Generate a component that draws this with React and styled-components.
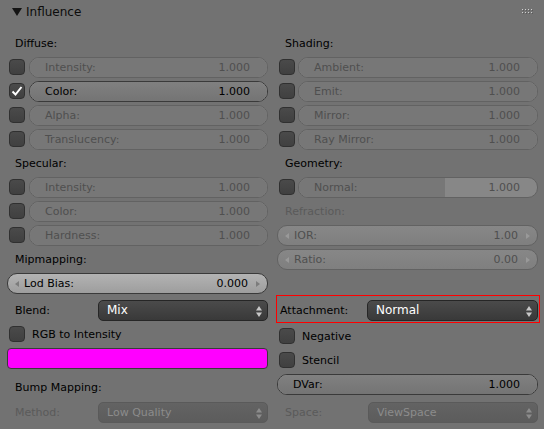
import React from 'react';
import styled, { createGlobalStyle, css } from 'styled-components';

const GlobalStyle = createGlobalStyle`
  html, body {
    margin: 0;
    padding: 0;
    background: #727272;
  }
  body {
    font-family: "DejaVu Sans", "Liberation Sans", sans-serif;
    font-size: 11px;
    color: #000;
  }
`;

const Panel = styled.div`
  width: 544px;
  height: 429px;
  overflow: hidden;
  background: #727272;
`;

const Header = styled.div`
  display: flex;
  align-items: center;
  height: 23px;
  padding: 0 11px 0 12px;
  font-size: 12px;
  color: #0c0c0c;
`;

const HeaderTitle = styled.span`
  margin-left: 4px;
  flex: 1;
`;

const Columns = styled.div`
  display: grid;
  grid-template-columns: 261px 261px;
  column-gap: 9px;
  padding: 0 7px;
  margin-top: ${p => p.$top || 0}px;
`;

const Column = styled.div`
  display: flex;
  flex-direction: column;
`;

const Line = styled.div`
  position: relative;
  display: flex;
  align-items: center;
  height: 24px;
  flex: 0 0 24px;
  margin-top: ${p => p.$top || 0}px;

  ${p => p.$highlight && css`
    &::after {
      content: '';
      position: absolute;
      top: -3px;
      left: -1px;
      right: -2px;
      bottom: -1px;
      border: 1px solid #ff0000;
      pointer-events: none;
    }
  `}
`;

const Label = styled.span`
  padding-left: ${p => (p.$pad ?? 8)}px;
  color: ${p => (p.$disabled ? '#5a5a5a' : '#000')};
  white-space: nowrap;
  ${p => p.$width && css`flex: 0 0 ${p.$width}px; box-sizing: border-box;`}
`;

const Box = styled.span`
  display: inline-flex;
  align-items: center;
  justify-content: center;
  box-sizing: border-box;
  flex: 0 0 16px;
  width: 16px;
  height: 16px;
  margin-left: 2px;
  border: 1px solid #303030;
  border-radius: 4px;
  background: linear-gradient(#4a4a4a, #404040);
`;

const BoxLabel = styled.span`
  margin-left: 7px;
`;

const fieldBase = css`
  position: relative;
  display: flex;
  align-items: center;
  box-sizing: border-box;
  height: 21px;
  border-radius: 10px;
  overflow: hidden;
  white-space: nowrap;
`;

const Slider = styled.div`
  ${fieldBase}
  flex: 1;
  margin-left: ${p => p.$indent || 0}px;
  padding: 0 17px 0 15px;
  border: 1px solid ${p => (p.$disabled ? '#626262' : '#3a3a3a')};
  color: ${p => (p.$disabled ? '#4f4f4f' : '#000')};
  background: ${p => (p.$disabled ? '#878787' : '#999999')};
`;

const SliderFill = styled.div`
  position: absolute;
  left: 0;
  top: 0;
  bottom: 0;
  background: ${p => (p.$disabled ? '#777777' : 'linear-gradient(#808080, #747474)')};
`;

const FieldText = styled.span`
  position: relative;
  flex: 1;
`;

const FieldValue = styled.span`
  position: relative;
`;

const NumField = styled.div`
  ${fieldBase}
  flex: 1;
  padding: 0 19px 0 16px;
  border: 1px solid ${p => (p.$disabled ? '#626262' : '#3a3a3a')};
  color: ${p => (p.$disabled ? '#4f4f4f' : '#000')};
  background: ${p => (p.$disabled ? 'linear-gradient(#878787, #7f7f7f)' : 'linear-gradient(#b3b3b3, #9d9d9d)')};
`;

const Arrow = styled.span`
  position: absolute;
  top: 7px;
  ${p => (p.$right ? 'right: 7px;' : 'left: 7px;')}
  width: 0;
  height: 0;
  border-top: 3px solid transparent;
  border-bottom: 3px solid transparent;
  ${p => (p.$right
    ? `border-left: 4px solid ${p.$disabled ? '#999' : '#7c7c7c'};`
    : `border-right: 4px solid ${p.$disabled ? '#999' : '#7c7c7c'};`)}
`;

const Menu = styled.div`
  ${fieldBase}
  flex: 1;
  border-radius: 5px;
  padding: 0 16px 0 8px;
  border: 1px solid ${p => (p.$disabled ? '#5a5a5a' : '#262626')};
  color: ${p => (p.$disabled ? '#8c8c8c' : '#fff')};
  font-size: ${p => (p.$big ? 12 : 11)}px;
  background: ${p => (p.$disabled ? 'linear-gradient(#636363, #5c5c5c)' : 'linear-gradient(#4b4b4b, #393939)')};
`;

const MenuArrows = styled.svg`
  position: absolute;
  right: 5px;
  top: 5px;
`;

const Swatch = styled.div`
  flex: 1;
  box-sizing: border-box;
  height: 21px;
  border: 1px solid #3a3a3a;
  border-radius: 4px;
  background: ${p => p.$color};
`;

const Check = () => (
  <svg width="12" height="12" viewBox="0 0 12 12">
    <polyline points="1.5,6.5 4.5,9.5 10.5,2" fill="none" stroke="#fff" strokeWidth="2" />
  </svg>
);

const Toggle = ({ checked, label, value, fill = 1, disabled = true, indent = 4 }) => (
  <Line>
    <Box>{checked && <Check />}</Box>
    <Slider $disabled={disabled} $indent={indent}>
      <SliderFill $disabled={disabled} style={{ width: `${fill * 100}%` }} />
      <FieldText>{label}</FieldText>
      <FieldValue>{value}</FieldValue>
    </Slider>
  </Line>
);

const Num = ({ label, value, disabled }) => (
  <Line>
    <NumField $disabled={disabled}>
      <Arrow $disabled={disabled} />
      <FieldText>{label}</FieldText>
      <FieldValue>{value}</FieldValue>
      <Arrow $right $disabled={disabled} />
    </NumField>
  </Line>
);

const Dropdown = ({ value, disabled, big }) => (
  <Menu $disabled={disabled} $big={big}>
    {value}
    <MenuArrows width="6" height="11" viewBox="0 0 6 11">
      <polygon points="3,0 6,4.5 0,4.5" fill={disabled ? '#8c8c8c' : '#c8c8c8'} />
      <polygon points="0,6.5 6,6.5 3,11" fill={disabled ? '#8c8c8c' : '#c8c8c8'} />
    </MenuArrows>
  </Menu>
);

const Grip = () => (
  <svg width="11" height="5" viewBox="0 0 11 5">
    {[0, 3, 6, 9].map(x =>
      [0, 3].map(y => (
        <g key={`${x}-${y}`}>
          <rect x={x + 1} y={y + 1} width="1" height="1" fill="#5a5a5a" />
          <rect x={x} y={y} width="1" height="1" fill="#d0d0d0" />
        </g>
      ))
    )}
  </svg>
);

const Disclosure = () => (
  <svg width="10" height="8" viewBox="0 0 10 8">
    <polygon points="0,0 10,0 5,8" fill="#141414" />
  </svg>
);

export default function App() {
  return (
    <>
      <GlobalStyle />
      <Panel>
        <Header>
          <Disclosure />
          <HeaderTitle>Influence</HeaderTitle>
          <Grip />
        </Header>

        <Columns $top={8}>
          <Column>
            <Line><Label>Diffuse:</Label></Line>
            <Toggle label="Intensity:" value="1.000" />
            <Toggle checked label="Color:" value="1.000" disabled={false} />
            <Toggle label="Alpha:" value="1.000" />
            <Toggle label="Translucency:" value="1.000" />
            <Line><Label>Specular:</Label></Line>
            <Toggle label="Intensity:" value="1.000" />
            <Toggle label="Color:" value="1.000" />
            <Toggle label="Hardness:" value="1.000" />
            <Line><Label>Mipmapping:</Label></Line>
            <Num label="Lod Bias:" value="0.000" />
          </Column>

          <Column>
            <Line><Label>Shading:</Label></Line>
            <Toggle label="Ambient:" value="1.000" indent={3} />
            <Toggle label="Emit:" value="1.000" indent={3} />
            <Toggle label="Mirror:" value="1.000" indent={3} />
            <Toggle label="Ray Mirror:" value="1.000" indent={3} />
            <Line><Label>Geometry:</Label></Line>
            <Toggle label="Normal:" value="1.000" fill={0.615} indent={3} />
            <Line><Label $disabled>Refraction:</Label></Line>
            <Num label="IOR:" value="1.00" disabled />
            <Num label="Ratio:" value="0.00" disabled />
          </Column>
        </Columns>

        <Columns $top={3}>
          <Column>
            <Line>
              <Label $width={91}>Blend:</Label>
              <Dropdown value="Mix" big />
            </Line>
            <Line>
              <Box />
              <BoxLabel>RGB to Intensity</BoxLabel>
            </Line>
            <Line>
              <Swatch $color="#ff00ff" />
            </Line>
            <Line $top={5}><Label>Bump Mapping:</Label></Line>
            <Line $top={1}>
              <Label $width={91} $disabled>Method:</Label>
              <Dropdown value="Low Quality" disabled />
            </Line>
          </Column>

          <Column>
            <Line $highlight>
              <Label $width={90} $pad={3}>Attachment:</Label>
              <Dropdown value="Normal" big />
            </Line>
            <Line $top={2}>
              <Box />
              <BoxLabel>Negative</BoxLabel>
            </Line>
            <Line>
              <Box />
              <BoxLabel>Stencil</BoxLabel>
            </Line>
            <Line>
              <Slider>
                <SliderFill style={{ width: '100%' }} />
                <FieldText>DVar:</FieldText>
                <FieldValue>1.000</FieldValue>
              </Slider>
            </Line>
            <Line $top={4}>
              <Label $width={91} $disabled>Space:</Label>
              <Dropdown value="ViewSpace" disabled />
            </Line>
          </Column>
        </Columns>
      </Panel>
    </>
  );
}
